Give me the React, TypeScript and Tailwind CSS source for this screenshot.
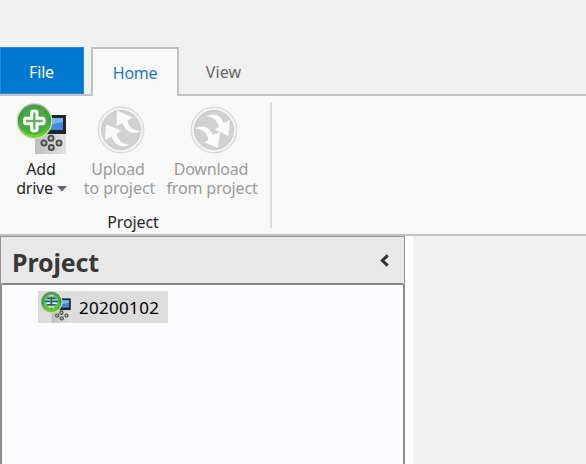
import { ReactNode } from "react";

function DriveIcon({ className, small = false }: { className: string; small?: boolean }) {
  return (
    <svg viewBox="0 0 52 52" className={className} aria-hidden="true">
      <defs>
        <linearGradient id={small ? "ringS" : "ring"} x2="0" y2="1">
          <stop stopColor="#579854" />
          <stop offset=".5" stopColor="#35a52f" />
          <stop offset="1" stopColor="#70e016" />
        </linearGradient>
        <linearGradient id={small ? "bodyS" : "body"}>
          <stop stopColor="#bdbdbd" />
          <stop offset="1" stopColor="#e2e2e2" />
        </linearGradient>
      </defs>
      <path d="M19 22H50V51H19Z" fill={small ? "url(#bodyS)" : "url(#body)"} />
      <path d="M31 12H50V31H31Z" fill="#20252a" />
      <path d="M33 15H47V27H33Z" fill="#4287db" />
      <path d="M35 15H47V19L34 22Z" fill="#72b5f2" />
      <g fill="#b8b8b8" stroke="#4b4b4b" strokeWidth="1.8">
        <circle cx="35" cy="35.3" r="2.6" />
        <circle cx="28" cy="40" r="2.6" />
        <circle cx="35.3" cy="44.5" r="2.6" />
        <circle cx="43" cy="40" r="2.6" />
      </g>
      <circle cx="18.5" cy="18" r="18" fill="#d5d8d2" />
      <circle cx="18.5" cy="18" r="16.7" fill={small ? "url(#ringS)" : "url(#ring)"} />
      {small ? (
        <>
          <circle cx="18.5" cy="17.5" r="12.5" fill="#74ad75" />
          <path d="M8 13H29V21H8Z" fill="#71c7dc" />
          <path d="M7 17H30M12 12H25M12 22H25M18.5 6V29" stroke="#28633d" strokeWidth="2" />
          <path d="M15 8H22M11 20H16M21 20H27M14 26H23" stroke="#e2f2df" strokeWidth="2.2" />
        </>
      ) : (
        <>
          <circle cx="18.5" cy="18" r="13.6" fill="#4aa846" />
          <path
            d="M15.6 9.5Q15.6 8 18.3 8T21 9.5V15.2H26.7Q28.2 15.2 28.2 18T26.7 20.8H21V26.5Q21 28 18.3 28T15.6 26.5V20.8H9.9Q8.4 20.8 8.4 18T9.9 15.2H15.6Z"
            fill="#64b35f"
            stroke="#fff"
            strokeWidth="3"
          />
        </>
      )}
    </svg>
  );
}

function TransferIcon({ down = false }: { down?: boolean }) {
  return (
    <svg viewBox="0 0 48 48" className="h-12 w-12" aria-hidden="true">
      <circle cx="24" cy="24" r="22.8" fill="#f2f2f2" stroke="#dadada" strokeWidth="1.3" />
      <circle cx="24" cy="24" r="19.5" fill="#d1d1d1" stroke="#cacaca" />
      {down ? (
        <g fill="#fafafa">
          <path d="M16 10.5C24 6 31 9 33.5 17L40 14L38.5 30L24.5 23.5L29 21C27 14 23 10.5 16 10.5Z" />
          <path d="M5 22.5C13 18.5 20 21 22.5 29L30 26L28 42L14.5 36.5L18.5 33.5C17 26.5 12 22.5 5 22.5Z" />
        </g>
      ) : (
        <g fill="#fafafa">
          <path d="M20 4.5L35.5 11.5L30.5 14.5C31.5 21 36.5 25 43.5 25C36 29.5 28 25.5 25.5 17L19.5 20Z" />
          <path d="M9 18.5L24.5 24.5L19.5 27.5C20.5 34 25.5 38.5 32.5 38.5C25 43 17 39 14.5 30.5L8 34Z" />
        </g>
      )}
    </svg>
  );
}

function RibbonButton({ icon, children, className }: { icon: ReactNode; children: ReactNode; className: string }) {
  return (
    <button className={`flex shrink-0 flex-col items-center whitespace-nowrap text-center text-[16px] leading-[19px] ${className}`}>
      <span className="flex h-[58px] items-start">{icon}</span>
      {children}
    </button>
  );
}

export default function App() {
  return (
    <div className="flex h-[464px] w-[586px] flex-col overflow-hidden bg-[#f1f1f1] font-['Noto_Sans','Open_Sans',sans-serif] text-[#262626]">
      <nav className="flex h-24 shrink-0 items-end text-[16px]">
        <div className="flex h-[49px] w-[91px] border-b-2 border-[#c4c4c4]">
          <button className="h-[47px] w-[84px] shrink-0 border border-[#2389d8] bg-[#0078d0] pr-px pt-[3px] tracking-[-0.2px] text-white">File</button>
        </div>
        <button className="h-[49px] w-[88px] border-x-2 border-t-2 border-[#c1c1c1] bg-[#f8f8f8] tracking-[-0.3px] text-[#1979ca]">Home</button>
        <div className="h-[49px] flex-1 border-b-2 border-[#c4c4c4]">
          <button className="h-[48px] w-[89px] pt-[2px] tracking-[0.1px] text-[#666]">View</button>
        </div>
      </nav>

      <section className="h-[138px] shrink-0 bg-[#f8f8f8] pt-[6px]">
        <div className="flex h-[126px] w-[272px] flex-col border-r-2 border-[#dcdcdc]">
          <div className="flex h-[104px]">
            <RibbonButton className="w-[82px]" icon={<span className="pl-[2px] pt-px"><DriveIcon className="h-[52px] w-[52px]" /></span>}>
              <span className="tracking-[-0.1px]">Add</span>
              <span className="flex items-center gap-[4px] pl-px tracking-[-0.2px]">
                drive
                <svg viewBox="0 0 10 6" className="h-[6px] w-[10px]"><path d="M0 0H10L5 5.5Z" fill="#666" /></svg>
              </span>
            </RibbonButton>
            <RibbonButton className="w-[76px] text-[#9b9b9b]" icon={<span className="pl-[2px] pt-1"><TransferIcon /></span>}>
              <span className="pr-1 tracking-[-0.1px]">Upload</span>
              <span className="pr-px tracking-[-0.05px]">to project</span>
            </RibbonButton>
            <RibbonButton className="w-[109px] text-[#9b9b9b]" icon={<span className="pl-[3px] pt-1"><TransferIcon down /></span>}>
              <span className="pr-[3px] tracking-[-0.2px]">Download</span>
              <span className="pr-px tracking-[-0.15px]">from project</span>
            </RibbonButton>
          </div>
          <p className="pr-1 pt-2 text-center text-[16px] leading-[33px] tracking-[-0.1px]">Project</p>
        </div>
      </section>

      <main className="flex min-h-0 flex-1 border-t-2 border-[#c1c1c1] bg-white">
        <aside className="flex w-[405px] flex-col border-x border-t border-[#929292] bg-[#e8e8e8]">
          <header className="flex h-[46px] items-center justify-between pl-[11px] pr-[15px]">
            <h1 className="pt-[3px] text-[25px] font-bold leading-8 tracking-[-0.15px] text-[#383838]">Project</h1>
            <svg viewBox="0 0 9 13" className="h-[13px] w-[9px]"><path d="M7.7 1.3L2.3 6.5L7.7 11.7" fill="none" stroke="#303030" strokeWidth="3" /></svg>
          </header>
          <div className="flex-1 rounded-t-[2px] border-x border-t-2 border-[#858585] bg-[#fcfcff] pl-[36px] pt-[6px]">
            <div className="flex h-[32px] w-[130px] items-center bg-[#dcdcdc] pl-[2px] text-[17px] text-black">
              <DriveIcon small className="h-[32px] w-[32px]" />
              <span className="pl-[7px] pt-[2px] tracking-[0.3px]">20200102</span>
            </div>
          </div>
        </aside>
        <div className="ml-2 flex-1 bg-[#f1f1f1]" />
      </main>
    </div>
  );
}
